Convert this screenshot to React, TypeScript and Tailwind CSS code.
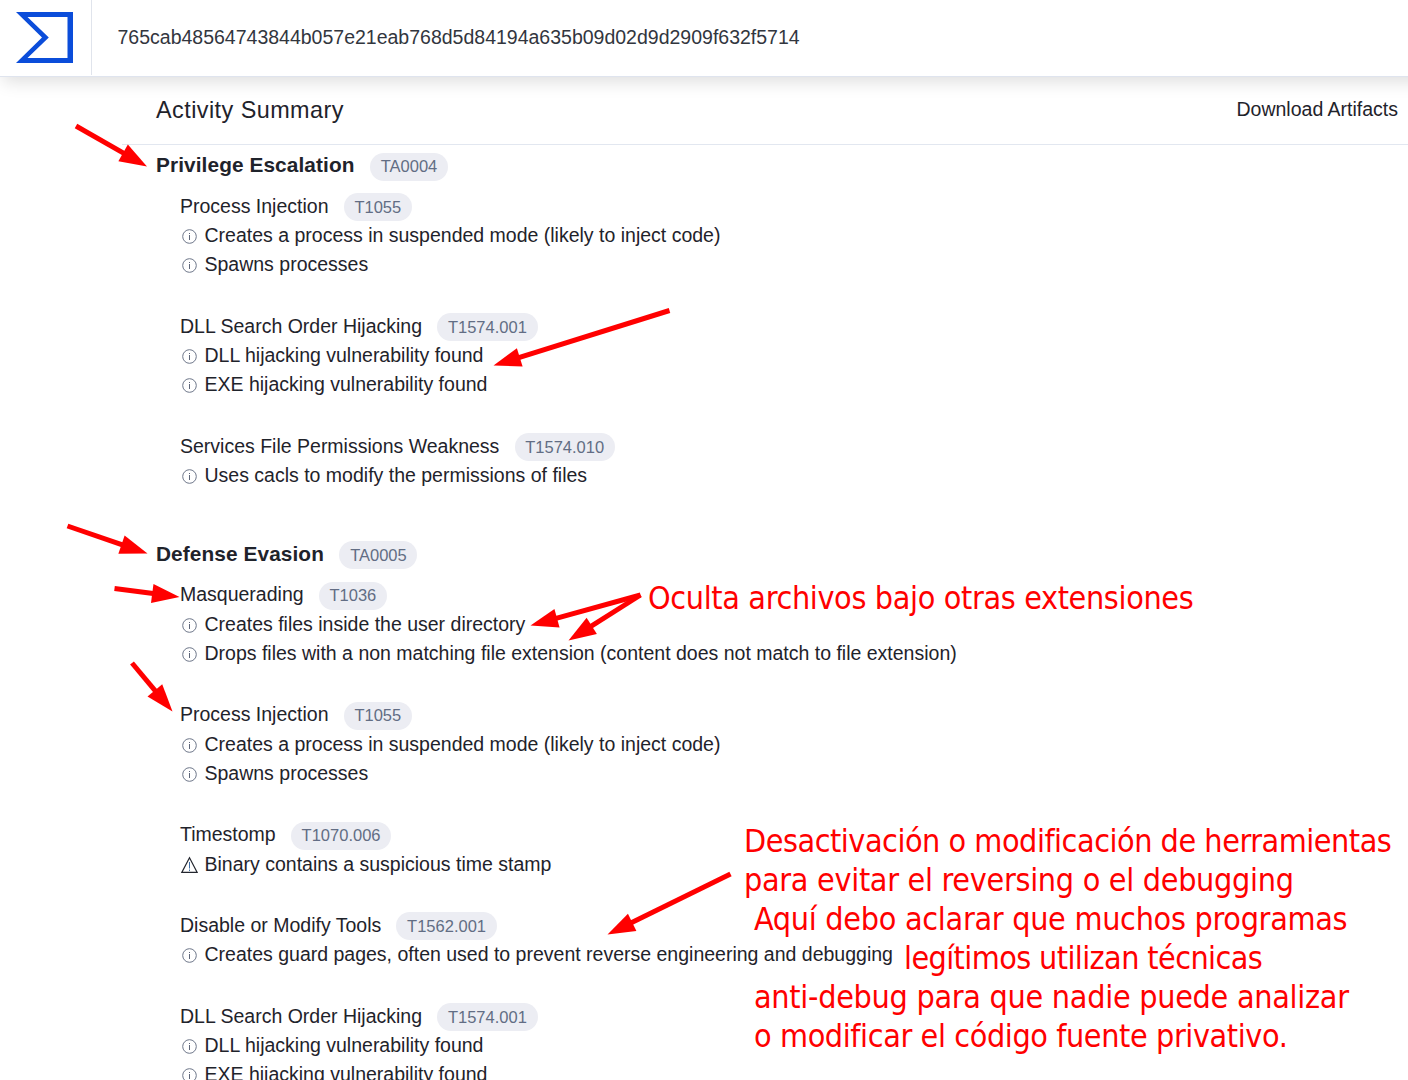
import React from "react";

type Finding = { text: string; warn?: boolean };
type Technique = { name: string; id: string; findings: Finding[] };
type Tactic = { name: string; id: string; techniques: Technique[] };

const tactics: Tactic[] = [
  {
    name: "Privilege Escalation",
    id: "TA0004",
    techniques: [
      {
        name: "Process Injection",
        id: "T1055",
        findings: [
          { text: "Creates a process in suspended mode (likely to inject code)" },
          { text: "Spawns processes" },
        ],
      },
      {
        name: "DLL Search Order Hijacking",
        id: "T1574.001",
        findings: [
          { text: "DLL hijacking vulnerability found" },
          { text: "EXE hijacking vulnerability found" },
        ],
      },
      {
        name: "Services File Permissions Weakness",
        id: "T1574.010",
        findings: [{ text: "Uses cacls to modify the permissions of files" }],
      },
    ],
  },
  {
    name: "Defense Evasion",
    id: "TA0005",
    techniques: [
      {
        name: "Masquerading",
        id: "T1036",
        findings: [
          { text: "Creates files inside the user directory" },
          { text: "Drops files with a non matching file extension (content does not match to file extension)" },
        ],
      },
      {
        name: "Process Injection",
        id: "T1055",
        findings: [
          { text: "Creates a process in suspended mode (likely to inject code)" },
          { text: "Spawns processes" },
        ],
      },
      {
        name: "Timestomp",
        id: "T1070.006",
        findings: [{ text: "Binary contains a suspicious time stamp", warn: true }],
      },
      {
        name: "Disable or Modify Tools",
        id: "T1562.001",
        findings: [
          { text: "Creates guard pages, often used to prevent reverse engineering and debugging" },
        ],
      },
      {
        name: "DLL Search Order Hijacking",
        id: "T1574.001",
        findings: [
          { text: "DLL hijacking vulnerability found" },
          { text: "EXE hijacking vulnerability found" },
        ],
      },
    ],
  },
];

function Logo() {
  return (
    <svg width="58" height="52" viewBox="0 0 58 52" className="block">
      <path
        fillRule="evenodd"
        fill="#0b4dda"
        d="M0 0H57V51H0L26 25.5ZM11.5 5L32.8 25.5L11.5 46H51.5V5Z"
      />
    </svg>
  );
}

function InfoIcon() {
  return (
    <svg width="18" height="18" viewBox="0 0 18 18" fill="none" className="block">
      <circle cx="9.5" cy="9.5" r="6.8" stroke="#6d7689" strokeWidth="1" />
      <path d="M9.5 8V13" stroke="#5d6679" strokeWidth="1" />
      <path d="M9.5 6V7" stroke="#5d6679" strokeWidth="1" />
    </svg>
  );
}

function WarnIcon() {
  return (
    <svg width="18" height="18" viewBox="0 0 18 18" fill="none" className="block">
      <path d="M9.5 1.8L17.2 16.4H1.8Z" stroke="#23262e" strokeWidth="1.2" />
      <path d="M9.5 6V12.5" stroke="#3f6fa8" strokeWidth="1" />
      <path d="M9.5 13.5V15" stroke="#3f6fa8" strokeWidth="1" />
    </svg>
  );
}

function Badge({ children }: { children: React.ReactNode }) {
  return (
    <span className="flex h-7 items-center rounded-full bg-[#ecedf3] px-[10.7px] text-[16.5px] leading-none text-[#626d84]">
      {children}
    </span>
  );
}

function TechniqueBlock({ technique }: { technique: Technique }) {
  return (
    <div className="pb-[32.25px] pl-6">
      <div className="flex h-[29.25px] items-center gap-[15.2px]">
        <span>{technique.name}</span>
        <div className="pt-[1.4px]">
          <Badge>{technique.id}</Badge>
        </div>
      </div>
      {technique.findings.map((f) => (
        <div key={f.text} className="flex h-[29.25px] items-center gap-[6.5px]">
          <span className="pt-[0.7px]">{f.warn ? <WarnIcon /> : <InfoIcon />}</span>
          <span>{f.text}</span>
        </div>
      ))}
    </div>
  );
}

const arrows: [number, number, number, number][] = [
  [76, 126, 147, 166.5],
  [669.5, 310.5, 493.5, 365.5],
  [67.5, 526, 147.5, 553.5],
  [114.5, 588.5, 179.5, 597],
  [640.5, 595, 530.5, 625.5],
  [640.5, 595, 568.5, 640.5],
  [132, 663, 172.5, 711.5],
  [730.5, 874, 607.5, 934.5],
];

function Arrow({ points }: { points: [number, number, number, number] }) {
  const [x1, y1, x2, y2] = points;
  const len = Math.hypot(x2 - x1, y2 - y1);
  const ux = (x2 - x1) / len;
  const uy = (y2 - y1) / len;
  const bx = x2 - ux * 27.5;
  const by = y2 - uy * 27.5;
  return (
    <g>
      <line x1={x1} y1={y1} x2={bx + ux} y2={by + uy} stroke="#ff0000" strokeWidth="5" />
      <polygon
        fill="#ff0000"
        points={`${x2},${y2} ${bx - uy * 9.6},${by + ux * 9.6} ${bx + uy * 9.6},${by - ux * 9.6}`}
      />
    </g>
  );
}

function Note({ className, children }: { className: string; children: React.ReactNode }) {
  return (
    <div
      className={`absolute whitespace-pre font-['DejaVu_Sans_Condensed','DejaVu_Sans',sans-serif] text-[32px] leading-[39px] text-[#ff0000] [font-stretch:condensed] ${className}`}
    >
      {children}
    </div>
  );
}

export default function App() {
  return (
    <div className="relative h-[1080px] w-[1408px] overflow-hidden bg-white font-['Liberation_Sans',Arial,sans-serif] text-[19.5px] leading-[29.25px] text-[#1f232b]">
      <header className="flex h-[77px] w-[1440px] items-start border-b border-[#dfe4ee] bg-white shadow-[0_8px_16px_-3px_rgba(0,0,0,0.13)]">
        <div className="flex h-[75px] w-[92px] items-center border-r border-[#e0e4ec] pl-4">
          <Logo />
        </div>
        <div className="flex h-[75px] items-center pl-[25.5px] text-[#32363e]">
          765cab48564743844b057e21eab768d5d84194a635b09d02d9d2909f632f5714
        </div>
      </header>

      <main className="pl-[122px]">
        <div className="flex h-[68px] items-center justify-between border-b border-[#e2e7f0] pr-2.5 pl-[34px]">
          <h2 className="text-[23.4px] tracking-[0.45px]">Activity Summary</h2>
          <span className="pb-[1.5px]">Download Artifacts</span>
        </div>
        {tactics.map((tactic) => (
          <section key={tactic.id} className="pt-[5px] pb-[11.6px] pl-[34px]">
            <div className="mb-[11.5px] flex h-[30px] items-center gap-[15.5px]">
              <h3 className="text-[20.8px] font-bold tracking-[0.1px]">{tactic.name}</h3>
              <div className="pt-[3px]">
                <Badge>{tactic.id}</Badge>
              </div>
            </div>
            {tactic.techniques.map((t) => (
              <TechniqueBlock key={t.id} technique={t} />
            ))}
          </section>
        ))}
      </main>

      <svg
        className="pointer-events-none absolute inset-0"
        width="1408"
        height="1080"
        viewBox="0 0 1408 1080"
      >
        {arrows.map((a) => (
          <Arrow key={a.join(",")} points={a} />
        ))}
      </svg>

      <Note className="top-[579px] left-[648px] tracking-[-0.35px]">Oculta archivos bajo otras extensiones</Note>
      <Note className="top-[822px] left-[744px] tracking-[-0.47px]">Desactivación o modificación de herramientas</Note>
      <Note className="top-[861px] left-[744px] tracking-[-0.3px]">para evitar el reversing o el debugging</Note>
      <Note className="top-[900px] left-[754px] tracking-[-0.29px]">Aquí debo aclarar que muchos programas</Note>
      <Note className="top-[939px] left-[904px] tracking-[-0.6px]">legítimos utilizan técnicas</Note>
      <Note className="top-[978px] left-[754px] tracking-[-0.28px]">anti-debug para que nadie puede analizar</Note>
      <Note className="top-[1017px] left-[754px] tracking-[-0.39px]">o modificar el código fuente privativo.</Note>
    </div>
  );
}
